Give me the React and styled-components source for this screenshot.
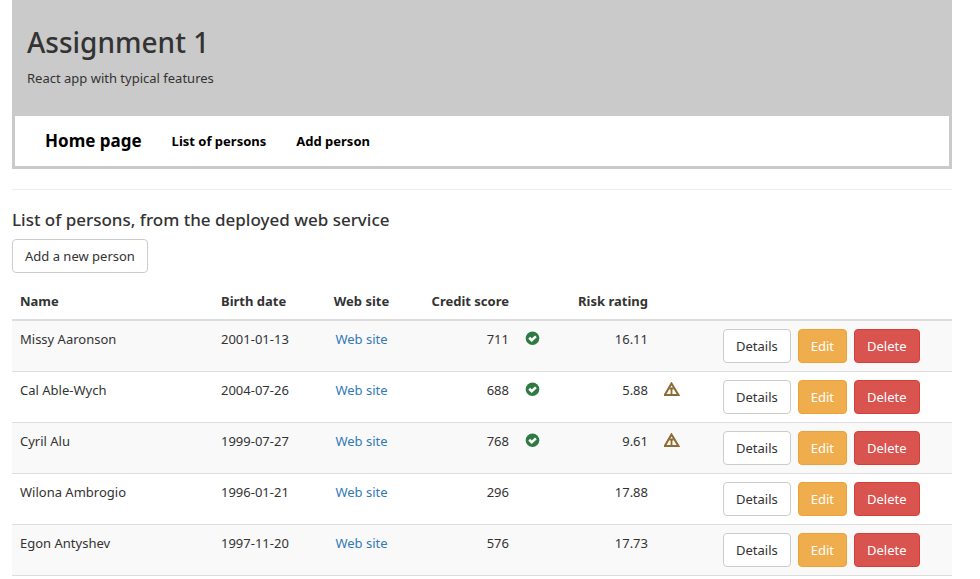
import React from "react";
import styled, { createGlobalStyle, css } from "styled-components";

const GlobalStyle = createGlobalStyle`
  *, *::before, *::after { box-sizing: border-box; }
  body {
    margin: 0;
    background: #fff;
    color: #333;
    font: 13px/20px "Segoe UI", "Noto Sans", "Open Sans", sans-serif;
  }
`;

const Page = styled.div`
  margin: 0 28px 0 12px;
`;

const Banner = styled.header`
  background: #cacaca;
  padding: 26px 15px 27px;
`;

const Title = styled.h1`
  margin: 0 0 9px;
  font-size: 28px;
  line-height: 33px;
  font-weight: 500;
`;

const Tagline = styled.p`
  margin: 0;
`;

const Nav = styled.nav`
  display: flex;
  align-items: center;
  gap: 30px;
  height: 54px;
  padding: 0 30px;
  border: 3px solid #cacaca;
  border-top-width: 1px;
`;

const NavLink = styled.a`
  color: #000;
  font-weight: 700;
  text-decoration: none;
`;

const Brand = styled(NavLink)`
  font-size: 17px;
`;

const Divider = styled.hr`
  margin: 20px 0;
  border: 0;
  border-top: 1px solid #eee;
`;

const Heading = styled.h2`
  margin: 0 0 10px;
  font-size: 17px;
  line-height: 19px;
  font-weight: 500;
`;

const tones = {
  plain: css`
    color: #333;
    background: #fff;
    border-color: #ccc;
  `,
  warning: css`
    color: #fff;
    background: #f0ad4e;
    border-color: #eea236;
  `,
  danger: css`
    color: #fff;
    background: #d9534f;
    border-color: #d43f3a;
  `,
};

const Button = styled.button`
  height: 34px;
  padding: 0 12px;
  border: 1px solid;
  border-radius: 4px;
  font: inherit;
  white-space: nowrap;
  cursor: pointer;
  ${({ $tone = "plain" }) => tones[$tone]}
`;

const Table = styled.table`
  width: 100%;
  margin-top: 10px;
  table-layout: fixed;
  border-spacing: 0;
`;

const Col = styled.col`
  width: ${({ $width }) => $width}px;
`;

const HeadCell = styled.th`
  padding: 8px;
  border-bottom: 2px solid #ddd;
  text-align: ${({ $align = "left" }) => $align};
  font-weight: 700;
  white-space: nowrap;
`;

const Row = styled.tr`
  &:nth-child(odd) { background: #f9f9f9; }
`;

const Cell = styled.td`
  padding: 8px;
  border-bottom: 1px solid #ddd;
  vertical-align: top;
  text-align: ${({ $align = "left" }) => $align};
  white-space: nowrap;
`;

const SiteLink = styled.a`
  color: #337ab7;
  text-decoration: none;
`;

const Actions = styled.div`
  display: flex;
  gap: 7px;
`;

const Icon = styled.svg`
  display: block;
  margin-top: 2px;
`;

const GoodScore = () => (
  <Icon width="15" height="15" viewBox="0 0 15 15" role="img" aria-label="Good credit score">
    <circle cx="7.5" cy="7.3" r="6.8" fill="#2f7a42" />
    <path d="M4.2 6.8 L6.7 9.2 L10.9 5.4" fill="none" stroke="#fff" strokeWidth="2.6" />
  </Icon>
);

const RiskWarning = () => (
  <Icon width="16" height="15" viewBox="0 0 16 15" role="img" aria-label="Risk warning">
    <path d="M7.5 1.4 L14.4 12.9 H0.8 Z" fill="none" stroke="#8f6a35" strokeWidth="2" />
    <path d="M7.5 5.5 V12.5 M5.4 6.5 H9.6" fill="none" stroke="#8f6a35" strokeWidth="1.8" />
  </Icon>
);

const columnWidths = [201, 112, 73, 119, 31, 108, 59];

const persons = [
  { name: "Missy Aaronson", born: "2001-01-13", score: "711", good: true, risk: "16.11" },
  { name: "Cal Able-Wych", born: "2004-07-26", score: "688", good: true, risk: "5.88", warn: true },
  { name: "Cyril Alu", born: "1999-07-27", score: "768", good: true, risk: "9.61", warn: true },
  { name: "Wilona Ambrogio", born: "1996-01-21", score: "296", risk: "17.88" },
  { name: "Egon Antyshev", born: "1997-11-20", score: "576", risk: "17.73" },
];

export default function App() {
  return (
    <>
      <GlobalStyle />
      <Page>
        <Banner>
          <Title>Assignment 1</Title>
          <Tagline>React app with typical features</Tagline>
        </Banner>
        <Nav>
          <Brand href="#home">Home page</Brand>
          <NavLink href="#persons">List of persons</NavLink>
          <NavLink href="#add">Add person</NavLink>
        </Nav>
        <Divider />
        <main>
          <Heading>List of persons, from the deployed web service</Heading>
          <Button type="button">Add a new person</Button>
          <Table>
            <colgroup>
              {columnWidths.map((width, i) => (
                <Col key={i} $width={width} />
              ))}
              <col />
            </colgroup>
            <thead>
              <tr>
                <HeadCell>Name</HeadCell>
                <HeadCell>Birth date</HeadCell>
                <HeadCell $align="center">Web site</HeadCell>
                <HeadCell $align="right">Credit score</HeadCell>
                <HeadCell />
                <HeadCell $align="right">Risk rating</HeadCell>
                <HeadCell />
                <HeadCell />
              </tr>
            </thead>
            <tbody>
              {persons.map((p) => (
                <Row key={p.name}>
                  <Cell>{p.name}</Cell>
                  <Cell>{p.born}</Cell>
                  <Cell $align="center">
                    <SiteLink href="#site">Web site</SiteLink>
                  </Cell>
                  <Cell $align="right">{p.score}</Cell>
                  <Cell>{p.good && <GoodScore />}</Cell>
                  <Cell $align="right">{p.risk}</Cell>
                  <Cell>{p.warn && <RiskWarning />}</Cell>
                  <Cell>
                    <Actions>
                      <Button type="button">Details</Button>
                      <Button type="button" $tone="warning">Edit</Button>
                      <Button type="button" $tone="danger">Delete</Button>
                    </Actions>
                  </Cell>
                </Row>
              ))}
            </tbody>
          </Table>
        </main>
      </Page>
    </>
  );
}
